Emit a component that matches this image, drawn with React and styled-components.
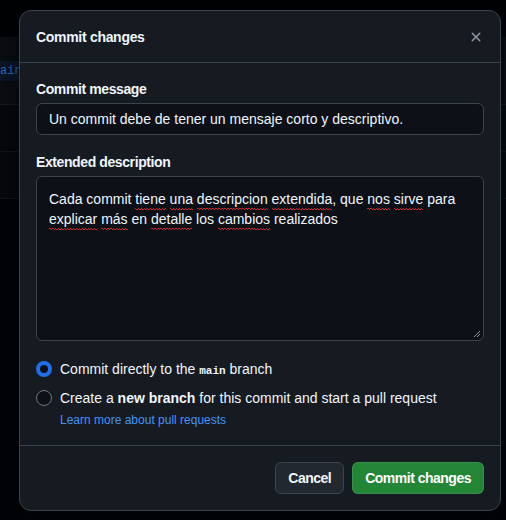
import React, { useState } from 'react'
import styled, { createGlobalStyle } from 'styled-components'

const GlobalStyle = createGlobalStyle`
  html, body { margin: 0; padding: 0; background: #010409; }
  body { font-family: "Liberation Sans", Arial, sans-serif; color: #f0f6fc; }
  * { box-sizing: border-box; }
`

const Page = styled.div`
  position: relative;
  width: 506px;
  height: 520px;
  overflow: hidden;
  background: #020306;
`
const TopBar = styled.div`
  height: 38px;
  background: #010204;
  border-bottom: 1px solid #0c0f13;
`
const SubBar = styled.div`
  height: 67px;
  background: #0a0d11;
  border-bottom: 1px solid #161a20;
  display: flex;
  align-items: center;
`
const Chip = styled.span`
  padding: 3px 6px 3px 0;
  border-radius: 0 4px 4px 0;
  background: #0b1627;
  color: #2d6fc4;
  font-family: "Liberation Mono", monospace;
  font-size: 12px;
`
const Row = styled.div`
  height: 47px;
  background: #06080b;
  border-bottom: 1px solid #12161b;
`

const Dialog = styled.div`
  position: absolute;
  left: 19px;
  top: 10px;
  width: 482px;
  height: 501px;
  background: #161b22;
  border: 1px solid #3d444d;
  border-radius: 12px;
  display: flex;
  flex-direction: column;
  box-shadow: 0 8px 24px rgba(1, 4, 9, 0.75);
`
const Header = styled.div`
  height: 52px;
  padding: 0 8px 0 16px;
  display: flex;
  align-items: center;
  justify-content: space-between;
  border-bottom: 1px solid #3d444d;
`
const Title = styled.h1`
  margin: 0;
  font-size: 14px;
  font-weight: 700;
  line-height: 20px;
  letter-spacing: -0.3px;
`
const CloseButton = styled.button`
  width: 32px;
  height: 32px;
  padding: 0;
  border: 0;
  background: transparent;
  color: #9198a1;
  display: flex;
  align-items: center;
  justify-content: center;
  cursor: pointer;
`
const Body = styled.div`
  padding: 16px 16px 16px;
  border-bottom: 1px solid #3d444d;
  display: flex;
  flex-direction: column;
`
const Label = styled.label`
  display: block;
  font-size: 14px;
  font-weight: 700;
  line-height: 20px;
  margin: ${p => (p.$first ? '0' : '17px')} 0 4px;
  letter-spacing: -0.4px;
`
const Input = styled.input`
  width: 100%;
  height: 32px;
  padding: 0 12px;
  background: #0d1117;
  border: 1px solid #3d444d;
  border-radius: 6px;
  color: #f0f6fc;
  font-family: inherit;
  font-size: 14px;
  outline: none;
`
const TextArea = styled.div`
  position: relative;
  height: 165px;
  padding: 12px 12px;
  background: #0d1117;
  border: 1px solid #3d444d;
  border-radius: 6px;
  font-size: 14px;
  line-height: 20px;
  color: #f0f6fc;
`
const Misspelled = styled.span`
  padding-bottom: 3px;
  background-image:
    repeating-linear-gradient(90deg, #d1242f 0 1.5px, transparent 1.5px 3px),
    repeating-linear-gradient(90deg, transparent 0 1.5px, #d1242f 1.5px 3px);
  background-size: 100% 1px, 100% 1px;
  background-position: 0 calc(100% - 1px), 0 100%;
  background-repeat: no-repeat;
`
const Grip = styled.svg`
  position: absolute;
  right: 2px;
  bottom: 2px;
`
const Options = styled.div`
  margin-top: 18px;
  display: flex;
  flex-direction: column;
  gap: 9px;
`
const Option = styled.label`
  display: flex;
  align-items: flex-start;
  gap: 8px;
  font-size: 14px;
  line-height: 20px;
  height: 20px;
  cursor: pointer;
`
const Radio = styled.span`
  flex: none;
  width: 16px;
  height: 16px;
  margin-top: 2px;
  border-radius: 50%;
  background: #0d1117;
  border: ${p => (p.$checked ? '4px solid #1f6feb' : '1px solid #6e7681')};
`
const Mono = styled.code`
  font-family: "Liberation Mono", monospace;
  font-size: 11px;
  font-weight: 700;
  line-height: 1;
`
const LinkLine = styled.a`
  display: block;
  margin: -6px 0 0 24px;
  font-size: 12px;
  line-height: 18px;
  color: #4493f8;
  text-decoration: none;
`
const Footer = styled.div`
  flex: 1;
  padding: 16px;
  display: flex;
  justify-content: flex-end;
  align-items: flex-start;
  gap: 8px;
`
const Button = styled.button`
  height: 32px;
  padding: 0 12px;
  border-radius: 6px;
  font-family: inherit;
  font-size: 14px;
  font-weight: 700;
  letter-spacing: -0.5px;
  cursor: pointer;
  color: ${p => (p.$primary ? '#ffffff' : '#f0f6fc')};
  background: ${p => (p.$primary ? '#238636' : '#212830')};
  border: 1px solid ${p => (p.$primary ? 'rgba(240,246,252,0.1)' : '#3d444d')};
`

const descLine1 = [
  ['Cada commit ', false], ['tiene', true], [' ', false], ['una', true], [' ', false],
  ['descripcion', true], [' ', false], ['extendida', true], [', que ', false], ['nos', true],
  [' ', false], ['sirve', true], [' para', false],
]
const descLine2 = [
  ['explicar', true], [' ', false], ['más', true], [' en ', false], ['detalle', true],
  [' los ', false], ['cambios', true], [' realizados', false],
]

const renderLine = parts =>
  parts.map(([t, bad], i) => (bad ? <Misspelled key={i}>{t}</Misspelled> : <span key={i}>{t}</span>))

export default function App() {
  const [direct, setDirect] = useState(true)
  const [msg, setMsg] = useState('Un commit debe de tener un mensaje corto y descriptivo.')

  return (
    <>
      <GlobalStyle />
      <Page>
        <TopBar />
        <SubBar>
          <Chip>ain</Chip>
        </SubBar>
        <Row />
        <Row />

        <Dialog role="dialog">
          <Header>
            <Title>Commit changes</Title>
            <CloseButton aria-label="Close">
              <svg width="16" height="16" viewBox="0 0 16 16" fill="currentColor">
                <path d="M3.72 3.72a.75.75 0 0 1 1.06 0L8 6.94l3.22-3.22a.749.749 0 0 1 1.275.326.749.749 0 0 1-.215.734L9.06 8l3.22 3.22a.749.749 0 0 1-.326 1.275.749.749 0 0 1-.734-.215L8 9.06l-3.22 3.22a.751.751 0 0 1-1.042-.018.751.751 0 0 1-.018-1.042L6.94 8 3.72 4.78a.75.75 0 0 1 0-1.06Z" />
              </svg>
            </CloseButton>
          </Header>

          <Body>
            <Label $first>Commit message</Label>
            <Input value={msg} onChange={e => setMsg(e.target.value)} />

            <Label>Extended description</Label>
            <TextArea>
              {renderLine(descLine1)}
              <br />
              {renderLine(descLine2)}
              <Grip width="9" height="9" viewBox="0 0 9 9">
                <path d="M8 2 L2 8 M8 5 L5 8" stroke="#9198a1" strokeWidth="1" />
              </Grip>
            </TextArea>

            <Options>
              <Option onClick={() => setDirect(true)}>
                <Radio $checked={direct} />
                <span>Commit directly to the <Mono>main</Mono> branch</span>
              </Option>
              <Option onClick={() => setDirect(false)}>
                <Radio $checked={!direct} />
                <span>Create a <b>new branch</b> for this commit and start a pull request</span>
              </Option>
              <LinkLine href="#">Learn more about pull requests</LinkLine>
            </Options>
          </Body>

          <Footer>
            <Button>Cancel</Button>
            <Button $primary>Commit changes</Button>
          </Footer>
        </Dialog>
      </Page>
    </>
  )
}
